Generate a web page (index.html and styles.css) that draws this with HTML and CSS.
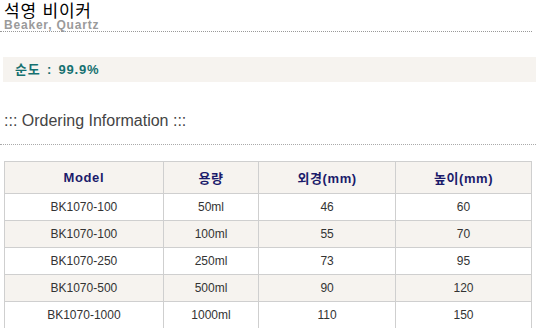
FILE: index.html
```html
<!DOCTYPE html>
<html lang="ko">
<head>
<meta charset="utf-8">
<link rel="stylesheet" href="styles.css">
</head>
<body>
<div class="page">
  <div class="head">
    <h1 class="title">석영 비이커</h1>
    <div class="subtitle">Beaker, Quartz</div>
  </div>
  <div class="purity">순도 : 99.9%</div>
  <h2 class="section">::: Ordering Information :::</h2>
  <table class="spec">
    <thead>
      <tr><th class="c1">Model</th><th class="c2">용량</th><th class="c3">외경(mm)</th><th class="c4">높이(mm)</th></tr>
    </thead>
    <tbody>
      <tr><td>BK1070-100</td><td>50ml</td><td>46</td><td>60</td></tr>
      <tr class="alt"><td>BK1070-100</td><td>100ml</td><td>55</td><td>70</td></tr>
      <tr><td>BK1070-250</td><td>250ml</td><td>73</td><td>95</td></tr>
      <tr class="alt"><td>BK1070-500</td><td>500ml</td><td>90</td><td>120</td></tr>
      <tr><td>BK1070-1000</td><td>1000ml</td><td>110</td><td>150</td></tr>
    </tbody>
  </table>
</div>
</body>
</html>
```

FILE: styles.css
```css
html, body {
  margin: 0;
  padding: 0;
  background: #fff;
}
.page {
  width: 536px;
  font-family: "Liberation Sans", "Noto Sans CJK KR", sans-serif;
}
.head {
  border-bottom: 1px dotted #999;
  width: 532px;
  padding: 1px 0 0 4px;
  box-sizing: border-box;
  height: 32px;
}
.title {
  margin: 0;
  font-family: "Noto Sans CJK KR", sans-serif;
  font-weight: 400;
  font-size: 17px;
  line-height: 17px;
  color: #000;
  letter-spacing: 0.8px;
}
.subtitle {
  margin-top: 1px;
  font-size: 12px;
  font-weight: bold;
  line-height: 12px;
  color: #9a9a9a;
  letter-spacing: 0.8px;
}
.purity {
  margin: 25px 0 0 3px;
  height: 25px;
  background: #f6f3ef;
  color: #157070;
  font-weight: bold;
  font-size: 13px;
  line-height: 25px;
  padding-left: 12px;
  letter-spacing: 0.8px;
  word-spacing: 2px;
}
.section {
  margin: 28px 0 0 0;
  padding: 0 0 0 4px;
  height: 34px;
  border-bottom: 1px dotted #aaa;
  font-weight: 400;
  font-size: 16px;
  line-height: 22px;
  color: #444;
}
.spec {
  margin: 16px 0 0 4px;
  width: 528px;
  border-collapse: collapse;
  font-size: 12px;
  color: #333;
}
.spec th, .spec td {
  border: 1px solid #cfcfcf;
  text-align: center;
  padding: 0;
}
.spec th {
  height: 31px;
  background: #f6f3ef;
  color: #1b1b6b;
  font-weight: bold;
  font-size: 13px;
  letter-spacing: 0.6px;
}
.spec td {
  height: 26px;
}
.spec tr.alt td {
  background: #f6f3ef;
}
.c1 { width: 159px; }
.c2 { width: 95px; }
.c3 { width: 137px; }
.c4 { width: 136px; }
```
